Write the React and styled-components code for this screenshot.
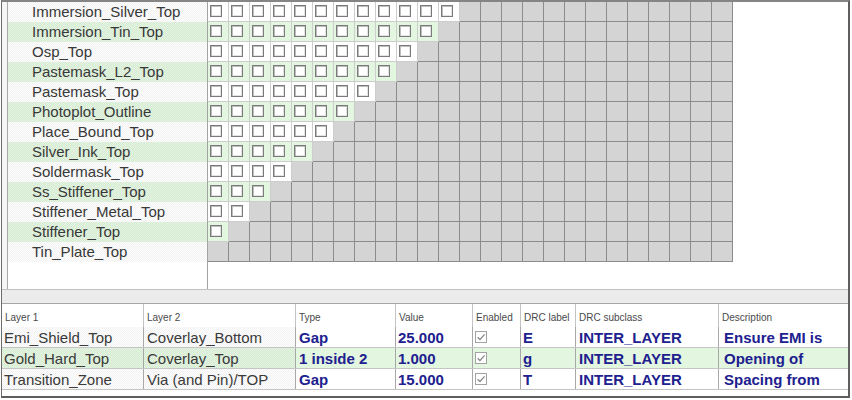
import React from 'react';
import styled, { createGlobalStyle } from 'styled-components';

const GlobalStyle = createGlobalStyle`
  html, body { margin: 0; padding: 0; background: #fff; }
  body { font-family: "Liberation Sans", Arial, sans-serif; }
`;

const COLS = 25;

const layers = [
  'Immersion_Silver_Top',
  'Immersion_Tin_Top',
  'Osp_Top',
  'Pastemask_L2_Top',
  'Pastemask_Top',
  'Photoplot_Outline',
  'Place_Bound_Top',
  'Silver_Ink_Top',
  'Soldermask_Top',
  'Ss_Stiffener_Top',
  'Stiffener_Metal_Top',
  'Stiffener_Top',
  'Tin_Plate_Top',
];

const rules = [
  { l1: 'Emi_Shield_Top', l2: 'Coverlay_Bottom', type: 'Gap', value: '25.000', label: 'E', sub: 'INTER_LAYER', desc: 'Ensure EMI is' },
  { l1: 'Gold_Hard_Top', l2: 'Coverlay_Top', type: '1 inside 2', value: '1.000', label: 'g', sub: 'INTER_LAYER', desc: 'Opening of' },
  { l1: 'Transition_Zone', l2: 'Via (and Pin)/TOP', type: 'Gap', value: '15.000', label: 'T', sub: 'INTER_LAYER', desc: 'Spacing from' },
];

const GREEN = '#e3f6e0';
const hatch = `
  background-image: repeating-conic-gradient(rgba(0, 0, 0, 0.055) 0 25%, transparent 0 50%);
  background-size: 2px 2px;
`;

const Frame = styled.div`
  box-sizing: border-box;
  width: 849px;
  height: 398px;
  margin-left: 1px;
  border-top: 2px solid #858585;
  border-left: 1px solid #6c6c6c;
  border-right: 2px solid #5e5e5e;
  border-bottom: 2px solid #5e5e5e;
  display: flex;
  flex-direction: column;
  background: #fff;
  overflow: hidden;
`;

/* ---------- layer matrix ---------- */

const TopPanel = styled.div`
  height: 287px;
  flex: none;
  display: flex;
`;

const Gutter = styled.div`
  width: 6px;
  flex: none;
  box-sizing: border-box;
  background: #f6f6f6;
  border-right: 1px solid #a9a9a9;
`;

const Sheet = styled.div`
  flex: 1;
  display: flex;
  flex-direction: column;
`;

const MatrixRow = styled.div`
  display: flex;
  height: 20px;
  flex: none;
`;

const RowLabel = styled.div`
  width: 200px;
  flex: none;
  box-sizing: border-box;
  padding-left: 24px;
  border-right: 1px solid #a3a3a3;
  background-color: ${p => (p.$alt ? GREEN : '#fff')};
  ${hatch}
  color: #383838;
  font-size: 15px;
  line-height: 19px;
  white-space: nowrap;
  overflow: hidden;
`;

const Cell = styled.div`
  width: 21px;
  height: 20px;
  flex: none;
  box-sizing: border-box;
  display: flex;
  align-items: center;
  padding: 0 0 1px 2px;
  background: ${p => (p.$open ? (p.$alt ? GREEN : '#fff') : '#d4d4d4')};
  border-right: 1px solid ${p => (p.$open ? '#cdcdcd' : '#8c8c8c')};
  border-bottom: 1px solid ${p => (p.$open ? '#cdcdcd' : '#8c8c8c')};
`;

const Box = styled.span`
  width: 12px;
  height: 12px;
  box-sizing: border-box;
  background: #fff;
  border: 1px solid #7a7a7a;
  box-shadow: inset 1px 1px 0 #bdbdbd, inset -1px -1px 0 #e4e4e4;
`;

const Filler = styled.div`
  flex: 1;
  display: flex;
`;

const FillerLabel = styled.div`
  width: 200px;
  box-sizing: border-box;
  border-right: 1px solid #a3a3a3;
`;

/* ---------- splitter ---------- */

const Splitter = styled.div`
  height: 15px;
  flex: none;
  box-sizing: border-box;
  background: #ececec;
  border-top: 1px solid #c2c2c2;
  border-bottom: 1px solid #a6a6a6;
`;

/* ---------- rules table ---------- */

const Table = styled.div`
  flex: 1;
  display: flex;
  flex-direction: column;
`;

const columns = '142px 152px 100px 77px 48px 55px 143px 1fr';

const HeadRow = styled.div`
  display: grid;
  grid-template-columns: ${columns};
  height: 23px;
  flex: none;
`;

const HeadCell = styled.div`
  box-sizing: border-box;
  padding: 3px 0 0 3px;
  display: flex;
  align-items: center;
  border-right: ${p => (p.$last ? 'none' : '1px solid #c4c4c4')};
  font-size: 10px;
  color: #4a4a4a;
  white-space: nowrap;
  overflow: hidden;
`;

const RuleRow = styled.div`
  display: grid;
  grid-template-columns: ${columns};
  height: 21px;
  flex: none;
  box-sizing: border-box;
  border-bottom: 1px solid #c4c4c4;
  background: ${p => (p.$alt ? GREEN : '#fff')};
`;

const Cellish = styled.div`
  box-sizing: border-box;
  display: flex;
  align-items: center;
  padding-left: ${p => p.$pad ?? 3}px;
  border-right: ${p => (p.$last ? 'none' : '1px solid #a8a8a8')};
  white-space: nowrap;
  overflow: hidden;
  font-size: 15px;
`;

const LayerCell = styled(Cellish)`
  ${hatch}
  color: #3a3a3a;
`;

const ValueCell = styled(Cellish)`
  color: #20208e;
  font-weight: bold;
`;

const CheckBox = styled.span`
  width: 12px;
  height: 12px;
  box-sizing: border-box;
  border: 1px solid #a2a2a2;
  background: #fff;
  display: flex;
  align-items: center;
  justify-content: center;
`;

const Checked = () => (
  <CheckBox>
    <svg width="10" height="10" viewBox="0 0 10 10">
      <path d="M1.6 5.2 L4 7.5 L8.6 2.4" fill="none" stroke="#8a8a8a" strokeWidth="1.3" />
    </svg>
  </CheckBox>
);

const headers = ['Layer 1', 'Layer 2', 'Type', 'Value', 'Enabled', 'DRC label', 'DRC subclass', 'Description'];

export default function App() {
  return (
    <>
      <GlobalStyle />
      <Frame>
        <TopPanel>
          <Gutter />
          <Sheet>
            {layers.map((name, r) => {
              const open = layers.length - 1 - r;
              return (
                <MatrixRow key={name}>
                  <RowLabel $alt={r % 2 === 1}>{name}</RowLabel>
                  {Array.from({ length: COLS }, (_, c) => (
                    <Cell key={c} $open={c < open} $alt={r % 2 === 1}>
                      {c < open && <Box />}
                    </Cell>
                  ))}
                </MatrixRow>
              );
            })}
            <Filler>
              <FillerLabel />
            </Filler>
          </Sheet>
        </TopPanel>
        <Splitter />
        <Table>
          <HeadRow>
            {headers.map((h, i) => (
              <HeadCell key={h} $last={i === headers.length - 1}>{h}</HeadCell>
            ))}
          </HeadRow>
          {rules.map((rule, i) => (
            <RuleRow key={rule.l1} $alt={i === 1}>
              <LayerCell $pad={2}>{rule.l1}</LayerCell>
              <LayerCell>{rule.l2}</LayerCell>
              <ValueCell>{rule.type}</ValueCell>
              <ValueCell $pad={2}>{rule.value}</ValueCell>
              <Cellish $pad={2}><Checked /></Cellish>
              <ValueCell $pad={2}>{rule.label}</ValueCell>
              <ValueCell>{rule.sub}</ValueCell>
              <ValueCell $pad={5} $last>{rule.desc}</ValueCell>
            </RuleRow>
          ))}
        </Table>
      </Frame>
    </>
  );
}
